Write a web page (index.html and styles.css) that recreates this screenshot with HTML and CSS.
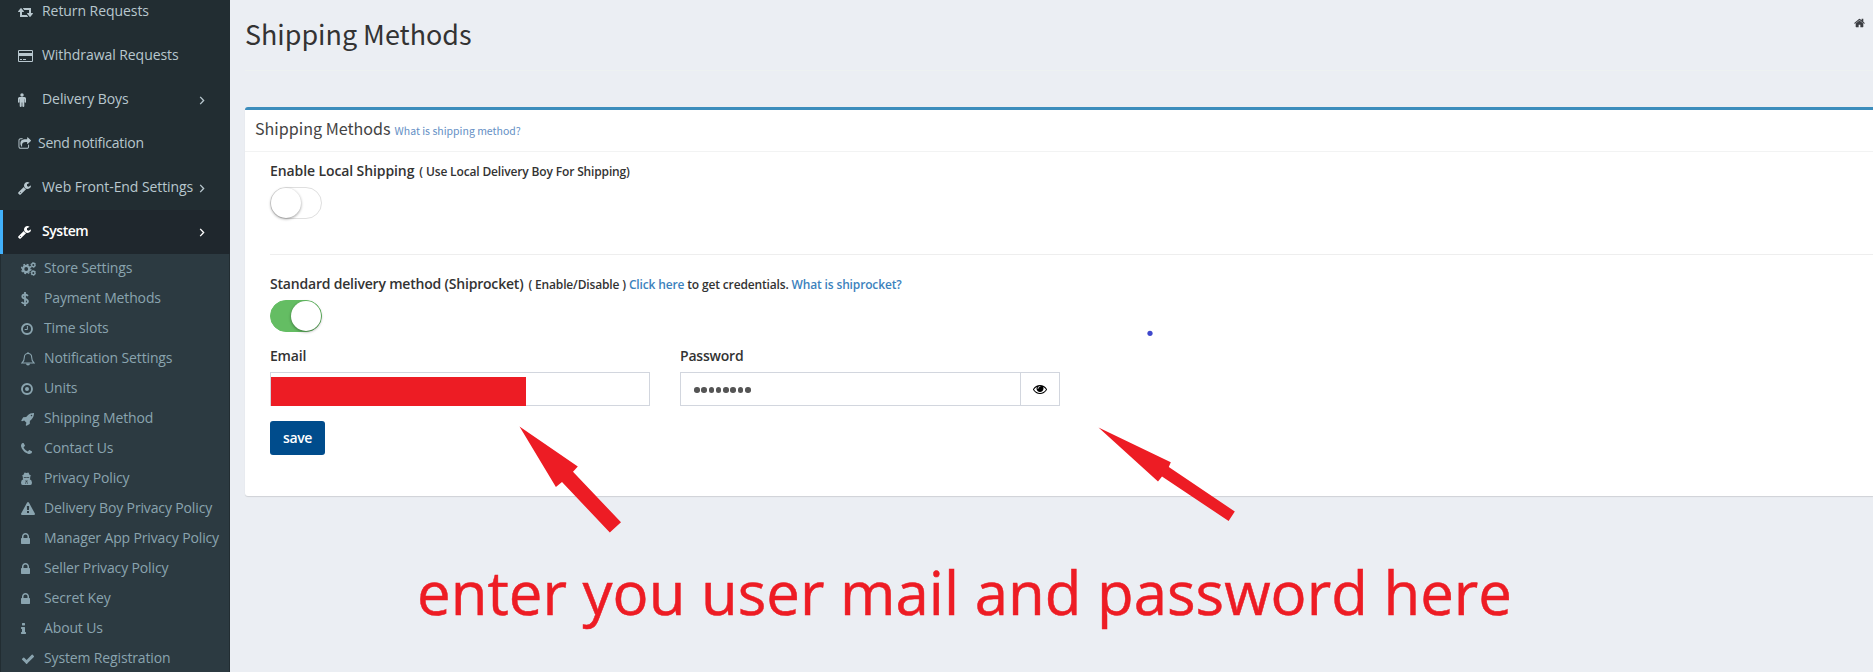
FILE: index.html
```html
<!DOCTYPE html>
<html lang="en">
<head>
<meta charset="utf-8">
<title>Shipping Methods</title>
<link rel="stylesheet" href="styles.css">
</head>
<body>
<svg class="defs" aria-hidden="true">
  <symbol id="lock" viewBox="320 0 1152 1792"><path d="M640 768h512v-192q0-106-75-181t-181-75-181 75-75 181v192zm832 96v576q0 40-28 68t-68 28h-960q-40 0-68-28t-28-68v-576q0-40 28-68t68-28h32v-192q0-184 132-316t316-132 316 132 132 316v192h32q40 0 68 28t28 68z"/></symbol>
  <symbol id="wrench" viewBox="0 0 1664 1792"><path d="M384 1472q0-26-19-45t-45-19-45 19-19 45 19 45 45 19 45-19 19-45zm644-420l-682 682q-37 37-90 37-52 0-91-37l-106-108q-38-36-38-90 0-53 38-91l681-681q39 98 114.500 173.500t173.500 114.500zm634-435q0 39-23 106-47 134-164.500 217.500t-258.500 83.500q-185 0-316.500-131.500t-131.500-316.500 131.500-316.500 316.500-131.500q58 0 121.500 16.500t107.500 46.500q16 11 16 28t-16 28l-293 169v224l193 107q5-3 79-48.500t135.500-81 70.500-35.500q15 0 23.500 10t8.500 25z"/></symbol>
</svg>
<div class="app">
  <nav class="sidebar">
    <a class="item"><svg class="ico" style="width:15px" viewBox="0 0 1920 1792"><path d="M1280 1504q0 13-9.500 22.500t-22.500 9.500h-960q-8 0-13.500-2t-9-7-5.500-8-3-11.500-1-11.500v-600h-192q-26 0-45-19t-19-45q0-24 15-41l320-384q19-22 49-22t49 22l320 384q15 17 15 41 0 26-19 45t-45 19h-192v384h576q16 0 25 11l160 192q7 10 7 21zm640-416q0 24-15 41l-320 384q-20 23-49 23t-49-23l-320-384q-15-17-15-41 0-26 19-45t45-19h192v-384h-576q-16 0-25-12l-160-192q-7-9-7-20 0-13 9.500-22.500t22.500-9.500h960q8 0 13.500 2t9 7 5.500 8 3 11.500 1 11.500v600h192q26 0 45 19t19 45z"/></svg><span>Return Requests</span></a>
    <a class="item"><svg class="ico" style="width:15px" viewBox="0 0 1920 1792"><path d="M1760 128q66 0 113 47t47 113v1216q0 66-47 113t-113 47h-1600q-66 0-113-47t-47-113v-1216q0-66 47-113t113-47h1600zm-1600 128q-13 0-22.500 9.500t-9.500 22.500v224h1664v-224q0-13-9.500-22.500t-22.500-9.500h-1600zm1600 1280q13 0 22.500-9.500t9.500-22.500v-608h-1664v608q0 13 9.500 22.500t22.500 9.500h1600zm-1504-128v-128h256v128h-256zm384 0v-128h384v128h-384z"/></svg><span>Withdrawal Requests</span></a>
    <a class="item"><svg class="ico" style="width:8px" viewBox="0 0 8 14"><circle cx="4" cy="1.900" r="1.750"/><path d="M1.500 4h5q1.500 0 1.500 1.500V9q0 .7-.7.7T6.600 9V6.200h-.3v6.900q0 .9-1 .9t-1-.9V9.400h-.6v3.700q0 .9-1 .9t-1-.9V6.200h-.3V9q0 .7-.7.7T0 9V5.500Q0 4 1.500 4z"/></svg><span>Delivery Boys</span><svg class="chev" viewBox="0 0 6 10"><path d="M1 1l3.800 4L1 9"/></svg></a>
    <a class="item tight"><svg class="ico" style="width:13px" viewBox="0 0 1728 1792"><path d="M1472 989v259q0 119-84.500 203.500t-203.500 84.500h-832q-119 0-203.500-84.500t-84.500-203.500v-832q0-119 84.500-203.500t203.500-84.500h255q13 0 22.500 9.500t9.500 22.500q0 27-26 32-77 26-133 60-10 4-16 4h-112q-66 0-113 47t-47 113v832q0 66 47 113t113 47h832q66 0 113-47t47-113v-214q0-19 18-29 28-13 54-37 16-16 35-8 21 9 21 29zm237-496l-384 384q-18 19-45 19-12 0-25-5-39-17-39-59v-192h-160q-323 0-438 131-119 137-74 473 3 23-20 34-8 2-12 2-16 0-26-13-10-14-21-31t-39.500-68.500-49.500-99.500-38.500-114-17.500-122q0-49 3.500-91t14-90 28-88 47-81.500 68.500-74 94.500-61.500 124.500-48.500 159.500-30.500 196.500-11h160v-192q0-42 39-59 13-5 25-5 26 0 45 19l384 384q19 19 19 45t-19 45z"/></svg><span>Send notification</span></a>
    <a class="item"><svg class="ico" style="width:13px"><use href="#wrench"/></svg><span class="wide">Web Front-End Settings</span><svg class="chev" viewBox="0 0 6 10"><path d="M1 1l3.800 4L1 9"/></svg></a>
    <a class="item active"><svg class="ico" style="width:13px"><use href="#wrench"/></svg><span>System</span><svg class="chev" viewBox="0 0 6 10"><path d="M1 1l3.800 4L1 9"/></svg></a>
    <div class="submenu">
      <a class="sub"><svg class="ico" style="width:15px" viewBox="0 0 15 14"><g fill="none" stroke="currentColor"><circle cx="5.200" cy="7" r="3.100" stroke-width="2.400"/><circle cx="5.200" cy="7" r="4.700" stroke-width="1.300" stroke-dasharray="1.850 1.840"/><circle cx="12.300" cy="3" r="1.700" stroke-width="1.400"/><circle cx="12.300" cy="3" r="2.500" stroke-width=".8" stroke-dasharray="1.300 1.310"/><circle cx="12.300" cy="11" r="1.700" stroke-width="1.400"/><circle cx="12.300" cy="11" r="2.500" stroke-width=".8" stroke-dasharray="1.300 1.310"/></g></svg><span>Store Settings</span></a>
      <a class="sub"><svg class="ico" style="width:8px" viewBox="0 0 8 14"><path d="M4 0v14M7 3.800Q5.700 2.500 4 2.500 1.400 2.500 1.300 4.500 1.300 6 4 6.800 7 7.700 6.900 9.500 6.700 11.500 4 11.500 2 11.500.6 10" fill="none" stroke="currentColor" stroke-width="1.800"/></svg><span>Payment Methods</span></a>
      <a class="sub"><svg class="ico" style="width:12px" viewBox="0 0 12 14"><circle cx="6" cy="7" r="5" fill="none" stroke="currentColor" stroke-width="1.900"/><path d="M6.400 4v3.500H3.700" fill="none" stroke="currentColor"/></svg><span>Time slots</span></a>
      <a class="sub"><svg class="ico" style="width:14px" viewBox="0 0 14 14"><path d="M7 1.500c2.300 0 3.700 1.600 3.700 4 0 3 .9 4.400 2.300 5.500H1c1.400-1.100 2.300-2.500 2.300-5.500 0-2.400 1.400-4 3.700-4z" fill="none" stroke="currentColor" stroke-width="1.100"/><path d="M6.300.3h1.400v1.500H6.300zM5 11.500h4a2 2 0 0 1-4 0z"/></svg><span>Notification Settings</span></a>
      <a class="sub"><svg class="ico" style="width:12px" viewBox="0 0 12 14"><circle cx="6" cy="7" r="5" fill="none" stroke="currentColor" stroke-width="1.900"/><circle cx="6" cy="7" r="2"/></svg><span>Units</span></a>
      <a class="sub"><svg class="ico" style="width:13px" viewBox="0 0 1664 1792"><path d="M1440 448q0-40-28-68t-68-28-68 28-28 68 28 68 68 28 68-28 28-68zm224-288q0 249-75.500 430.500t-253.500 360.500q-81 80-195 176l-20 379q-2 16-16 26l-384 224q-7 4-16 4-12 0-23-9l-64-64q-13-14-8-32l85-276-281-281-276 85q-3 1-9 1-14 0-23-9l-64-64q-17-19-5-39l224-384q10-14 26-16l379-20q96-114 176-195 188-187 358-258t431-71q14 0 24 9.500t10 22.500z"/></svg><span>Shipping Method</span></a>
      <a class="sub"><svg class="ico" style="width:11px" viewBox="192 0 1408 1792"><path d="M1600 1240q0 27-10 70.500t-21 68.500q-21 50-122 106-94 51-186 51-27 0-53-3.500t-57.500-12.500-47-14.500-55.500-20.500-49-18q-98-35-175-83-127-79-264-216t-216-264q-48-77-83-175-3-9-18-49t-20.500-55.500-14.500-47-12.500-57.500-3.500-53q0-92 51-186 56-101 106-122 25-11 68.500-21t70.500-10q14 0 21 3 18 6 53 76 11 19 30 54t35 63.500 31 53.500q3 4 17.500 25t21.500 35.500 7 28.500q0 20-28.500 50t-62 55-62 53-28.500 46q0 9 5 22.500t8.500 20.500 14 24 11.500 19q76 137 174 235t235 174q2 1 19 11.500t24 14 20.500 8.500 22.500 5q18 0 46-28.500t53-62 55-62 50-28.500q14 0 28.500 7t35.500 21.500 25 17.500q25 15 53.500 31t63.500 35 54 30q70 35 76 53 3 7 3 21z"/></svg><span>Contact Us</span></a>
      <a class="sub"><svg class="ico" style="width:11px" viewBox="0 0 11 14"><path fill-rule="evenodd" d="M3.600.5 5.500.9 7.400.5 8.700 3.100l1.500.7-1 .8v1.600L8.800 7.300Q11 8 11 10.800 11 13 9.300 13H1.700Q0 13 0 10.800 0 8 2.200 7.300L1.800 6.200V4.600l-1-.8 1.500-.7zM2.800 5v.8h2.100l.6-.4.6.4h2.100V5zM4.200 8.300l.6 1-.4 2.500.6.300.2-2.300h.6l.2 2.300.6-.3-.4-2.500.6-1-1.300.5z"/></svg><span>Privacy Policy</span></a>
      <a class="sub"><svg class="ico" style="width:14px" viewBox="0 0 1792 1792"><path d="M1024 1375v-190q0-14-9.500-23.500t-22.500-9.500h-192q-13 0-22.500 9.500t-9.500 23.500v190q0 14 9.500 23.500t22.500 9.500h192q13 0 22.500-9.500t9.500-23.500zm-2-374l18-459q0-12-10-19-13-11-24-11h-220q-11 0-24 11-10 7-10 21l17 457q0 10 10 16.500t24 6.500h185q14 0 23.500-6.500t10.500-16.500zm-14-934l768 1408q35 63-2 126-17 29-46.500 46t-63.500 17h-1536q-34 0-63.500-17t-46.500-46q-37-63-2-126l768-1408q17-31 47-49t65-18 65 18 47 49z"/></svg><span>Delivery Boy Privacy Policy</span></a>
      <a class="sub"><svg class="ico" style="width:9px"><use href="#lock"/></svg><span>Manager App Privacy Policy</span></a>
      <a class="sub"><svg class="ico" style="width:9px"><use href="#lock"/></svg><span>Seller Privacy Policy</span></a>
      <a class="sub"><svg class="ico" style="width:9px"><use href="#lock"/></svg><span>Secret Key</span></a>
      <a class="sub"><svg class="ico" style="width:5px" viewBox="576 0 640 1792"><path d="M1216 1344v128q0 26-19 45t-45 19h-512q-26 0-45-19t-19-45v-128q0-26 19-45t45-19h64v-384h-64q-26 0-45-19t-19-45v-128q0-26 19-45t45-19h384q26 0 45 19t19 45v576h64q26 0 45 19t19 45zm-128-1152v192q0 26-19 45t-45 19h-256q-26 0-45-19t-19-45v-192q0-26 19-45t45-19h256q26 0 45 19t19 45z"/></svg><span>About Us</span></a>
      <a class="sub"><svg class="ico" style="width:14px" viewBox="0 0 1792 1792"><path d="M1671 566q0 40-28 68l-724 724-136 136q-28 28-68 28t-68-28l-136-136-362-362q-28-28-28-68t28-68l136-136q28-28 68-28t68 28l294 295 656-657q28-28 68-28t68 28l136 136q28 28 28 68z"/></svg><span>System Registration</span></a>
    </div>
  </nav>
  <main class="content">
    <header class="page-head">
      <h1>Shipping Methods</h1>
      <svg class="home" viewBox="64 0 1664 1792"><path d="M1472 992v480q0 26-19 45t-45 19h-384v-384h-256v384h-384q-26 0-45-19t-19-45v-480q0-1 .5-3t.5-3l575-474 575 474q1 2 1 6zm223-69l-62 74q-8 9-21 11h-3q-13 0-21-7l-692-577-692 577q-12 8-24 7-13-2-21-11l-62-74q-8-10-7-23.500t11-21.500l719-599q32-26 76-26t76 26l244 204v-195q0-14 9-23t23-9h192q14 0 23 9t9 23v408l219 182q10 8 11 21.500t-7 23.500z"/></svg>
    </header>
    <section class="box">
      <div class="box-head"><h3>Shipping Methods</h3><a>What is shipping method?</a></div>
      <div class="box-body">
        <div class="label first"><b>Enable Local Shipping</b><small>( Use Local Delivery Boy For Shipping)</small></div>
        <span class="switch"></span>
        <div class="rule"></div>
        <div class="label second"><b>Standard delivery method (Shiprocket)</b><small>( Enable/Disable ) <a>Click here</a> to get credentials. <a>What is shiprocket?</a></small></div>
        <span class="switch on"></span>
        <div class="fields">
          <div class="field"><label>Email</label><div class="input"><span class="redact"></span></div></div>
          <div class="field"><label>Password</label><div class="input"><div class="dots"><i></i><i></i><i></i><i></i><i></i><i></i><i></i><i></i></div><span class="addon"><svg viewBox="0 0 1792 1792"><path d="M1664 960q-152-236-381-353 61 104 61 225 0 185-131.500 316.500t-316.500 131.500-316.500-131.500-131.500-316.500q0-121 61-225-229 117-381 353 133 205 333.500 326.500t434.500 121.500 434.500-121.500 333.500-326.500zm-720-384q0-20-14-34t-34-14q-125 0-214.500 89.500t-89.500 214.500q0 20 14 34t34 14 34-14 14-34q0-86 61-147t147-61q20 0 34-14t14-34zm848 384q0 34-20 69-140 230-376.500 368.500t-499.500 138.500-499.500-139-376.500-368q-20-35-20-69t20-69q140-229 376.500-368t499.500-139 499.500 139 376.500 368q20 35 20 69z"/></svg></span></div></div>
        </div>
        <button class="save">save</button>
      </div>
    </section>
  </main>
</div>
<svg class="notes" viewBox="0 0 1873 672">
  <path d="M519.500 426.500 577.800 466.500 573 471.700 621 522.300 609.800 532.500 562 482 555.900 487z"/>
  <path d="M1098.500 427.500 1170.800 462.200 1168.800 467 1234.800 511.500 1228.600 521 1162 476.500 1158 481.500z"/>
  <ellipse class="blue" cx="1150" cy="333.300" rx="2.600" ry="2.600"/>
  <text x="417" y="615" textLength="1095" lengthAdjust="spacingAndGlyphs">enter you user mail and password here</text>
</svg>
</body>
</html>
```
FILE: styles.css
```css
* { box-sizing: border-box; }
body { margin: 0; height: 672px; overflow: hidden; background: #ebeef3; font: 14px/20px "Open Sans", "Noto Sans", sans-serif; color: #333; position: relative; }
.defs { display: none; }
.app { display: flex; height: 672px; overflow: hidden; }
.sidebar { flex: none; width: 230px; margin-top: -10px; background: #222d32; color: #b8c7ce; letter-spacing: -0.06px; white-space: nowrap; }
.item { display: flex; align-items: center; height: 44px; padding: 0 25px 0 15px; border-left: 3px solid transparent; position: relative; }
.ico { flex: none; height: 14px; fill: currentColor; margin-right: auto; }
.item > span { width: 163px; order: 1; padding-bottom: 2px; }
.item.tight > span { width: 167px; letter-spacing: -0.25px; }
.item .wide { letter-spacing: -0.08px; }
.chev { position: absolute; right: 25px; top: 18px; width: 6px; height: 9px; fill: none; stroke: currentColor; stroke-width: 1.500; }
.active { background: #1f272d; color: #fff; border-left-color: #41b0fb; font-weight: 600; letter-spacing: -0.45px; }
.submenu { margin: 0 1px; background: #2c3a41; color: #8aa4af; }
.sub { display: flex; align-items: center; height: 30px; padding-left: 20px; letter-spacing: -0.14px; }
.sub > span { width: 185px; flex: none; padding-bottom: 2px; }
.content { flex: 1; min-width: 0; padding-left: 15px; }
.page-head { display: flex; justify-content: space-between; align-items: flex-start; height: 71px; border-bottom: 1px solid #edf1f1; padding: 14px 8px 0 0; }
h1, h3 { margin: 0; font-family: "Noto Sans CJK SC", "Open Sans", sans-serif; font-weight: 400; }
h1 { font-size: 26.900px; line-height: 40px; }
.home { width: 11px; height: 12px; margin-top: 3px; fill: #3b3d42; }
.box { margin-top: 36px; height: 389px; background: #fff; border-top: 3px solid #3c8dbc; border-radius: 3px 0 0 3px; box-shadow: 0 1px 1px rgba(0,0,0,.12); }
.box-head { display: flex; align-items: baseline; height: 42px; padding: 5px 10px 0; gap: 4px; border-bottom: 1px solid #f2f3f3; }
h3 { font-size: 16.100px; line-height: 26px; color: #444; }
.box-head a { font: 10.500px/20px "Noto Sans CJK SC", "Open Sans", sans-serif; color: #6590c5; }
.box-body { padding: 9px 0 0 25px; }
.label { display: flex; align-items: baseline; gap: 5px; height: 20px; font-weight: 600; }
.label b { font-weight: 600; }
.first b { letter-spacing: -0.1px; }
.second b { letter-spacing: -0.2px; }
.label small { font-size: 12px; letter-spacing: -0.15px; }
.label a { color: #3c82bd; }
.switch { display: block; width: 52px; height: 32px; margin-top: 6px; border-radius: 16px; border: 1px solid #dfdfdf; background: #fff; }
.switch::before { content: ""; display: block; width: 30px; height: 30px; border-radius: 50%; background: #fff; box-shadow: 0 1px 3px rgba(0,0,0,.4); }
.switch.on { background: #64bd63; border-color: #64bd63; }
.switch.on::before { margin-left: 20px; }
.rule { height: 1px; margin: 35px 0 19px; background: #eee; }
.fields { display: flex; gap: 30px; margin-top: 14px; }
.field { width: 380px; }
.field label { display: block; height: 26px; font-weight: 600; letter-spacing: -0.2px; }
.input { display: flex; height: 34px; border: 1px solid #d2d6de; background: #fff; }
.redact { width: 255px; height: 29px; margin-top: 4px; background: #ed1c24; }
.dots { flex: 1; display: flex; align-items: center; gap: 1.800px; padding: 2px 0 0 13px; }
.dots i { width: 5.500px; height: 5.500px; border-radius: 50%; background: #555; }
.addon { width: 39px; border-left: 1px solid #d2d6de; display: flex; align-items: center; justify-content: center; }
.addon svg { width: 14px; height: 14px; }
.save { display: block; margin-top: 15px; width: 55px; height: 34px; padding: 0 0 1px; border: 0; border-radius: 3px; background: #004c8c; color: #fff; font: 600 14px/20px "Open Sans", sans-serif; letter-spacing: -0.4px; }
.notes { position: absolute; left: 0; top: 0; width: 1873px; height: 672px; pointer-events: none; fill: #ed1c24; }
.notes text { font: 61px "Open Sans", sans-serif; stroke: #ed1c24; stroke-width: .5px; }
.blue { fill: #3f48cc; }
```
